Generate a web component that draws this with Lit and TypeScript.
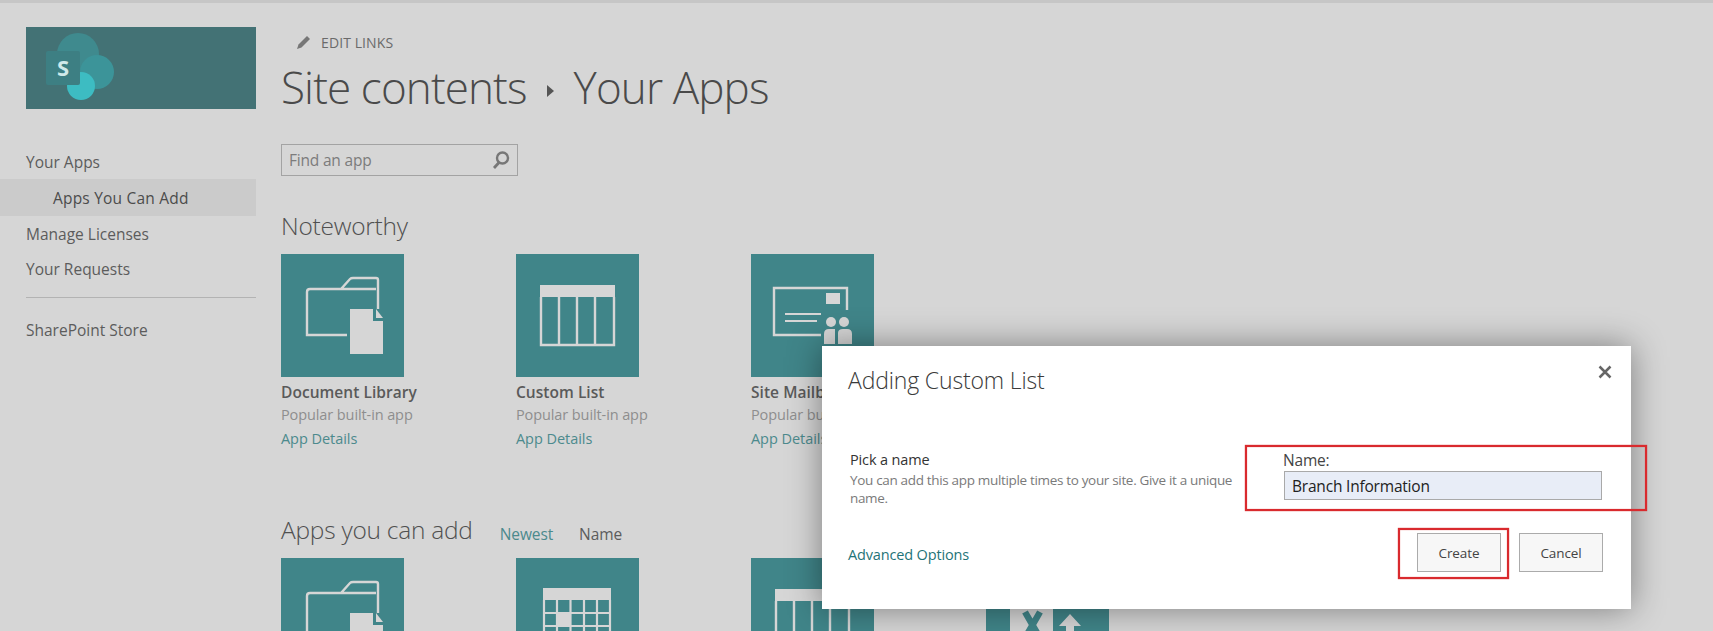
import { LitElement, html, css, svg } from "lit";
import { customElement } from "lit/decorators.js";

const folder = svg`<path d="M66 81H26V38q0-3 3-3h31l9-10q1-1 3-1h23q2 0 2 2v29M60 35h35" fill="none" stroke="#d6d6d6" stroke-width="2.400"/><path d="M69 55h23v12h10v33H69z" fill="#d6d6d6"/><path d="M95 55l7 9h-7z" fill="#d6d6d6"/>`;
const list = svg`<path d="M24 31h75v12H24z" fill="#d6d6d6"/><path d="M25 43v48h73V43M43 43v48M61 43v48M79 43v48" fill="none" stroke="#d6d6d6" stroke-width="2.400"/>`;
const mailbox = svg`<path d="M70 81H23V34h73v22" fill="none" stroke="#d6d6d6" stroke-width="2.400"/><path d="M75 39h14v11H75z" fill="#d6d6d6"/><path d="M34 60h36M34 67h32" stroke="#d6d6d6" stroke-width="2.200" fill="none"/><circle cx="80" cy="68" r="5" fill="#d6d6d6"/><circle cx="93" cy="68" r="5" fill="#d6d6d6"/><path d="M73 90V80q0-5 5-5h6v15zM87 90V79q0-4 5-4h4q5 0 5 5v10z" fill="#d6d6d6"/>`;
const calendar = svg`<path d="M27 30h68v12H27z" fill="#d6d6d6"/><path d="M28 42v52h66V42M41 42v52M54.500 42v52M68 42v52M81 42v52M28 55h66M28 68h66M28 81h66" fill="none" stroke="#d6d6d6" stroke-width="2.200"/><path d="M41 55h14v13H41z" fill="#d6d6d6"/>`;
const excel = svg`<path d="M24 0h43v123H24z" fill="#d6d6d6"/><path d="M39 54l15 26M54 54L39 80" stroke="#408589" stroke-width="6.500" fill="none"/><path d="M84 56l11 12h-7v20h-8V68h-7z" fill="#d6d6d6"/>`;

const tile = (icon: unknown) => html`<div class="tile"><svg viewBox="0 0 123 123" width="123" height="123">${icon}</svg></div>`;

@customElement("app-root")
export class AppRoot extends LitElement {
  static styles = css`
    :host { display: block; position: relative; width: 1713px; height: 631px; overflow: hidden; background: #d6d6d6; color: #555; font-family: "Open Sans", "Noto Sans", sans-serif; }
    .stripe { height: 3px; background: #c6c6c6; }
    .page { display: grid; grid-template-columns: 256px 1fr; column-gap: 25px; padding-top: 24px; }
    .logo { margin-left: 26px; height: 82px; background: #437275; display: block; }
    .logo svg { display: block; }
    nav { margin-top: 35px; font-size: 15.5px; color: #5c5c5c; }
    .nav-item { height: 36px; padding-left: 26px; display: flex; align-items: center; }
    .nav-item.sel { background: #cbcbcb; padding-left: 53px; color: #4c4c4c; height: 37px; margin-top: -1px; letter-spacing: 0.2px; }
    .nav-item.tight { height: 35px; }
    .rule { margin: 10px 0 14px 26px; border-top: 1px solid #b3b3b3; }
    .edit { display: flex; align-items: center; gap: 9px; margin: 5px 0 0 15px; height: 20px; font-size: 14px; letter-spacing: 0.1px; color: #6a6a6a; }
    h1 { margin: 4px 0 0; font-weight: 300; font-size: 44px; line-height: 62px; letter-spacing: -0.88px; color: #4a4a4a; display: flex; align-items: center; white-space: nowrap; }
    .crumb { width: 47px; display: flex; justify-content: center; padding-top: 8px; }
    .search { margin-top: 26px; height: 30px; border: 1px solid #a3a3a3; display: flex; align-items: center; justify-content: space-between; padding: 0 6px 0 7px; box-sizing: content-box; width: 222px; font-size: 15.5px; letter-spacing: -0.2px; color: #7c7c7c; }
    h2 { margin: 0; font-weight: 300; font-size: 24.5px; color: #505050; letter-spacing: -0.25px; line-height: 32px; }
    .note { margin-top: 34px; }
    .tiles { display: flex; gap: 112px; }
    .row1 { margin-top: 12px; }
    .card { width: 123px; white-space: nowrap; }
    .tile { width: 123px; height: 123px; background: #408589; }
    .tile svg { display: block; }
    .c-name { margin-top: 4px; font-size: 15.5px; font-weight: 600; letter-spacing: 0.04px; line-height: 22px; color: #5a5a5a; }
    .c-sub { font-size: 14.5px; line-height: 24px; letter-spacing: -0.1px; color: #8e8e8e; }
    .c-link { font-size: 14.5px; line-height: 24px; letter-spacing: -0.05px; color: #4c8a8d; }
    .add-head { margin-top: 63px; display: flex; align-items: center; }
    .sort { font-size: 15.5px; letter-spacing: -0.1px; padding-top: 8px; }
    .sort.a { margin-left: 27px; color: #4c8a8d; }
    .sort.b { margin-left: 26px; color: #5c5c5c; }
    .row2 { margin-top: 12px; }
    .dialog { position: absolute; left: 822px; top: 346px; width: 809px; height: 263px; box-sizing: border-box; background: #fff; box-shadow: 0 0 32px rgba(0,0,0,.42); color: #333; padding: 17px 26px 0; }
    .d-title { font-weight: 300; font-size: 23px; line-height: 34px; color: #3a3a3a; letter-spacing: -0.15px; }
    .d-body { margin-top: 53px; padding-left: 2px; display: grid; grid-template-columns: 395px 1fr; column-gap: 39px; }
    .pick { font-size: 14.5px; line-height: 20px; letter-spacing: -0.15px; color: #333; }
    .desc { margin-top: 1px; font-size: 13.5px; line-height: 18px; letter-spacing: -0.33px; color: #7a7a7a; }
    .lbl { font-size: 15.5px; line-height: 20px; letter-spacing: -0.2px; color: #444; margin-left: -1px; }
    .input { margin-top: 1px; width: 318px; height: 29px; box-sizing: border-box; background: #e8edf7; border: 1.5px solid #a9a9a9; font-size: 15.5px; letter-spacing: -0.2px; padding-left: 7px; display: flex; align-items: center; color: #222; }
    .d-foot { margin-top: 26px; display: flex; align-items: center; justify-content: space-between; padding-right: 2px; }
    .adv { font-size: 14.5px; letter-spacing: -0.15px; color: #1f7478; padding-top: 3px; }
    .btns { display: flex; gap: 18px; }
    .btn { width: 84px; height: 39px; box-sizing: border-box; background: #f7f7f7; border: 1.5px solid #ababab; font-size: 13.5px; letter-spacing: -0.1px; color: #444; display: flex; align-items: center; justify-content: center; }
    .close { position: absolute; right: 19px; top: 19px; display: block; }
    .red { position: absolute; border: 2px solid #d92a2e; box-shadow: 0 0 1px #d92a2e, inset 0 0 1px #d92a2e; box-sizing: border-box; pointer-events: none; }
    .red.r1 { left: 1245px; top: 445px; width: 402px; height: 66px; }
    .red.r2 { left: 1398px; top: 528px; width: 111px; height: 51px; }
  `;

  render() {
    const cards = [
      [folder, "Document Library"],
      [list, "Custom List"],
      [mailbox, "Site Mailbox"],
    ] as const;
    return html`
      <div class="stripe"></div>
      <div class="page">
        <aside>
          <div class="logo">
            <svg width="230" height="82" viewBox="0 0 230 82">
              <circle cx="52" cy="27" r="21" fill="#3f8a8e"/>
              <circle cx="71" cy="45" r="17" fill="#3c9499"/>
              <circle cx="55" cy="59" r="14" fill="#3dbcc2"/>
              <rect x="20" y="24" width="34" height="34" rx="2" fill="#3d7f83"/>
              <text x="37" y="48.500" text-anchor="middle" font-family="Open Sans" font-weight="700" font-size="22" fill="#cfe9e9">S</text>
            </svg>
          </div>
          <nav>
            <div class="nav-item">Your Apps</div>
            <div class="nav-item sel">Apps You Can Add</div>
            <div class="nav-item tight">Manage Licenses</div>
            <div class="nav-item">Your Requests</div>
            <div class="rule"></div>
            <div class="nav-item">SharePoint Store</div>
          </nav>
        </aside>
        <main>
          <div class="edit">
            <svg width="16" height="16" viewBox="0 0 16 16"><path d="M1 15l1.500-4.500L11 2l3 3-8.500 8.500z" fill="#777"/></svg>
            EDIT LINKS
          </div>
          <h1>Site contents<span class="crumb"><svg width="7" height="12" viewBox="0 0 7 12"><path d="M0 0l7 6-7 6z" fill="#555"/></svg></span>Your Apps</h1>
          <div class="search">Find an app
            <svg width="20" height="20" viewBox="0 0 20 20"><circle cx="11.500" cy="8" r="5.500" fill="none" stroke="#777" stroke-width="2.400"/><path d="M8 12.500L3 18" stroke="#777" stroke-width="2.800" fill="none"/></svg>
          </div>
          <h2 class="note">Noteworthy</h2>
          <div class="tiles row1">
            ${cards.map(([i, n]) => html`<div class="card">${tile(i)}<div class="c-name">${n}</div><div class="c-sub">Popular built-in app</div><div class="c-link">App Details</div></div>`)}
          </div>
          <div class="add-head"><h2>Apps you can add</h2><span class="sort a">Newest</span><span class="sort b">Name</span></div>
          <div class="tiles row2">
            <div class="card">${tile(folder)}</div>
            <div class="card">${tile(calendar)}</div>
            <div class="card">${tile(list)}</div>
            <div class="card">${tile(excel)}</div>
          </div>
        </main>
      </div>
      <div class="dialog">
        <div class="d-title">Adding Custom List</div>
        <svg class="close" width="14" height="14" viewBox="0 0 14 14"><path d="M1.500 1.500l11 11M12.500 1.500l-11 11" stroke="#666" stroke-width="2.500" fill="none"/></svg>
        <div class="d-body">
          <div>
            <div class="pick">Pick a name</div>
            <div class="desc">You can add this app multiple times to your site. Give it a unique name.</div>
          </div>
          <div>
            <div class="lbl">Name:</div>
            <div class="input">Branch Information</div>
          </div>
        </div>
        <div class="d-foot">
          <span class="adv">Advanced Options</span>
          <div class="btns"><div class="btn">Create</div><div class="btn">Cancel</div></div>
        </div>
      </div>
      <div class="red r1"></div>
      <div class="red r2"></div>
    `;
  }
}
